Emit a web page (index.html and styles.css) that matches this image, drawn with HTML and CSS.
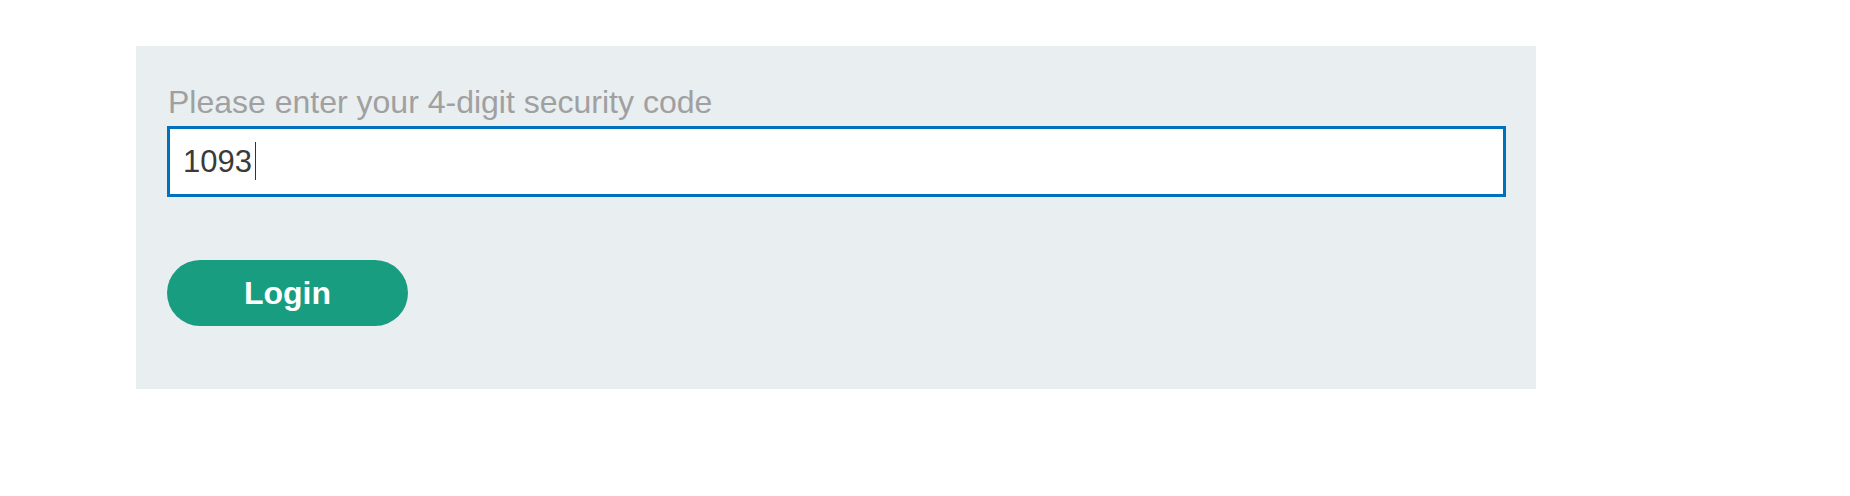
FILE: index.html
```html
<!DOCTYPE html>
<html lang="en">
<head>
<meta charset="utf-8">
<title>Login</title>
<link rel="stylesheet" href="styles.css">
</head>
<body>
<main class="page">
  <form class="panel" onsubmit="return false">
    <label class="label" for="mfa-code">Please enter your 4-digit security code</label>
    <div class="field">
      <input class="input" id="mfa-code" name="mfa-code" type="text" value="1093">
      <span class="caret"></span>
    </div>
    <button class="button" type="submit">Login</button>
  </form>
</main>
</body>
</html>
```
FILE: styles.css
```css
* { box-sizing: border-box; }
html, body { margin: 0; background: #ffffff; }
body { font-family: "Liberation Sans", Arial, sans-serif; }
.page { padding: 46px 0 0 136px; }
.panel {
  width: 1400px;
  background: #e9eef1;
  padding: 38px 30px 63px 31px;
  display: flex;
  flex-direction: column;
  align-items: flex-start;
}
.label {
  display: block;
  font-size: 32px;
  line-height: 37px;
  color: #a0a0a0;
  margin: 0 0 5px 1px;
}
.field { position: relative; width: 100%; }
.input {
  display: block;
  width: 100%;
  height: 71px;
  border: 3px solid #0071bc;
  background: #ffffff;
  padding: 0 13px;
  font-family: "Liberation Sans", Arial, sans-serif;
  font-size: 31px;
  color: #3a3a3a;
  outline: none;
  margin: 0;
}
.caret {
  position: absolute;
  left: 88px;
  top: 16px;
  width: 1px;
  height: 38px;
  background: #333333;
}
.button {
  margin-top: 63px;
  width: 241px;
  height: 66px;
  border: none;
  border-radius: 33px;
  background: #189d80;
  color: #ffffff;
  font-family: "Liberation Sans", Arial, sans-serif;
  font-weight: bold;
  font-size: 32px;
  cursor: pointer;
  padding: 0;
}
```
